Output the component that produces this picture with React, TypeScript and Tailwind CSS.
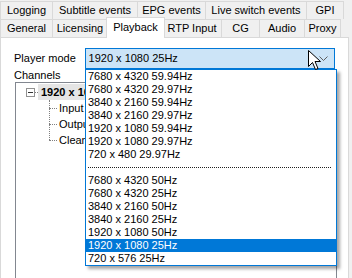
import React from "react";

const row1 = [
  { label: "Logging", w: "w-[53px]" },
  { label: "Subtitle events", w: "w-[86px]" },
  { label: "EPG events", w: "w-[69px]" },
  { label: "Live switch events", w: "w-[102px]" },
  { label: "GPI", w: "w-[38px]" },
];

const row2 = [
  { label: "General", w: "w-[53px]" },
  { label: "Licensing", w: "w-[56px]" },
  { label: "Playback", w: "w-[59px]", active: true },
  { label: "RTP Input", w: "w-[60px]" },
  { label: "CG", w: "w-[39px]" },
  { label: "Audio", w: "w-[46px]" },
  { label: "Proxy", w: "w-[37px]" },
];

const modes = [
  "7680 x 4320 59.94Hz",
  "7680 x 4320 29.97Hz",
  "3840 x 2160 59.94Hz",
  "3840 x 2160 29.97Hz",
  "1920 x 1080 59.94Hz",
  "1920 x 1080 29.97Hz",
  "720 x 480 29.97Hz",
  "---",
  "7680 x 4320 50Hz",
  "7680 x 4320 25Hz",
  "3840 x 2160 50Hz",
  "3840 x 2160 25Hz",
  "1920 x 1080 50Hz",
  "1920 x 1080 25Hz",
  "720 x 576 25Hz",
];

function Tab({ label, w, active }: { label: string; w: string; active?: boolean }) {
  if (active) {
    return (
      <div
        className={`${w} relative z-10 -mx-[2px] -mt-[2px] -mb-px flex h-[21px] shrink-0 items-center justify-center border border-b-0 border-[#d9d9d9] bg-white pb-[1px] text-black`}
      >
        {label}
      </div>
    );
  }
  return (
    <div
      className={`${w} -ml-px flex h-[18px] shrink-0 items-center justify-center border border-b-0 border-[#d9d9d9] bg-[#f0f0f0] text-black first:ml-0`}
    >
      {label}
    </div>
  );
}

// 下拉列表：覆盖在 Channels 树上方
function ModeList() {
  return (
    <div className="absolute left-[85px] top-[69px] z-20 w-[252px] border border-[#0078d7] bg-white shadow-[3px_3px_3px_rgba(0,0,0,0.35)]">
      {modes.map((m) =>
        m === "---" ? (
          <div key={m} className="flex h-[13px] items-center px-[2px]">
            <div className="w-[243px] border-t border-dotted border-[#202020]" />
          </div>
        ) : (
          <div
            key={m}
            className={`flex h-[13px] items-center pl-[2px] leading-none ${
              m === "1920 x 1080 25Hz" ? "bg-[#0078d7] text-white" : "text-black"
            }`}
          >
            {m}
          </div>
        ),
      )}
    </div>
  );
}

function Cursor() {
  return (
    <svg
      className="absolute left-[308px] top-[50px] z-30"
      width="14"
      height="21"
      viewBox="0 0 14 21"
    >
      <path
        d="M0.5 0.5 L0.5 16.5 L4.5 12.5 L7.5 19.5 L10 18.5 L7 11.5 L12.5 11.5 Z"
        fill="white"
        stroke="black"
        strokeWidth="1"
      />
    </svg>
  );
}

export default function App() {
  return (
    <div
      className="relative h-[278px] w-[352px] overflow-hidden bg-[#f0f0f0] text-[11px] text-black"
      style={{ fontFamily: '"Liberation Sans", Arial, sans-serif' }}
    >
      {/* 两排标签 */}
      <div className="flex pt-[1px]">
        {row1.map((t) => (
          <Tab key={t.label} {...t} />
        ))}
      </div>
      <div className="flex items-end">
        {row2.map((t) => (
          <Tab key={t.label} {...t} />
        ))}
      </div>

      {/* 标签页内容 */}
      <div className="h-[260px] w-[349px] border border-[#d9d9d9] bg-white px-[13px] pt-[10px]">
        <div className="flex items-center">
          <span className="w-[71px]">Player mode</span>
          <div className="flex h-[21px] w-[252px] items-center justify-between border border-[#0078d7] bg-[#cce4f7] pl-[3px] pr-[6px]">
            <span>1920 x 1080 25Hz</span>
            <svg width="9" height="6" viewBox="0 0 9 6">
              <path d="M0.5 0.5 L4.5 4.5 L8.5 0.5" fill="none" stroke="#606060" strokeWidth="1" />
            </svg>
          </div>
        </div>
        <div className="flex h-[13px] items-center">Channels</div>
        <div className="ml-[1px] h-[220px] w-[322px] border border-[#828790] bg-white pt-[1px]">
          {/* 树的可见部分止于下拉列表左缘 */}
          <div className="w-[69px] overflow-hidden whitespace-nowrap">
            <div className="flex h-[16px] items-center pl-[10px]">
              <div className="flex h-[9px] w-[9px] shrink-0 items-center justify-center border border-[#919191] bg-white">
                <div className="h-px w-[5px] bg-[#333]" />
              </div>
              <div className="w-[3px] shrink-0 border-t border-dotted border-[#808080]" />
              <span className="bg-[#e5e5e5] px-[3px] font-bold">1920 x 1080 25Hz</span>
            </div>
            <div className="relative pl-[33px]">
              <div className="absolute left-[33px] top-0 h-[40px] border-l border-dotted border-[#808080]" />
              {["Input", "Output", "Clean feed"].map((c) => (
                <div key={c} className="flex h-[16px] items-center">
                  <div className="w-[8px] shrink-0 border-t border-dotted border-[#808080]" />
                  <span className="pl-[2px]">{c}</span>
                </div>
              ))}
            </div>
          </div>
        </div>
      </div>

      <ModeList />
      <Cursor />
    </div>
  );
}
